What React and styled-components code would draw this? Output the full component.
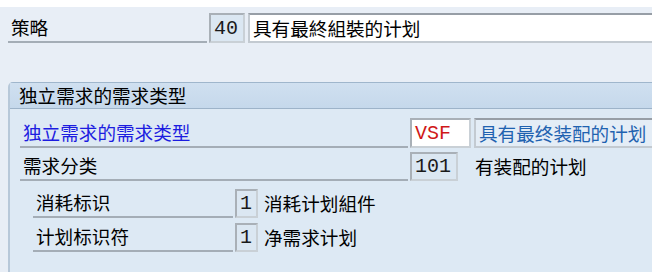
import React from "react";
import styled, { createGlobalStyle } from "styled-components";

const Global = createGlobalStyle`
  html, body { margin: 0; padding: 0; background: #ffffff; }
  body { font-family: "Noto Sans CJK SC", "Liberation Sans", sans-serif; }
`;

const Screen = styled.div`
  margin-top: 7px;
  width: 652px;
  height: 265px;
  box-sizing: border-box;
  background: #e8eef6;
  padding: 6px 0 0 8px;
  display: flex;
  flex-direction: column;
`;

const Row = styled.div`
  display: flex;
  align-items: stretch;
  height: ${(p) => p.$h || 29}px;
  margin-top: ${(p) => p.$mt || 0}px;
  padding-left: ${(p) => p.$indent || 0}px;
`;

const Label = styled.div`
  width: ${(p) => p.$w}px;
  box-sizing: border-box;
  padding-left: 3px;
  border-bottom: 2px solid #a4adb6;
  display: flex;
  align-items: center;
  font-size: 18.6px;
  line-height: 1;
  color: ${(p) => (p.$blue ? "#1c1ce0" : "#000")};
`;

const Key = styled.div`
  width: ${(p) => p.$w}px;
  margin-left: 2px;
  box-sizing: border-box;
  border: 2px solid #a9b0b7;
  border-right-color: #c9d0d6;
  border-bottom-color: #c9d0d6;
  background: ${(p) => (p.$white ? "#ffffff" : "#dbe7f2")};
  display: flex;
  align-items: center;
  padding-left: ${(p) => p.$pl ?? 3}px;
  font-family: "Liberation Mono", "DejaVu Sans Mono", monospace;
  font-size: 20px;
  color: ${(p) => (p.$red ? "#d01818" : "#1a1a1a")};
`;

const Desc = styled.div`
  flex: ${(p) => (p.$box ? 1 : "none")};
  margin-left: ${(p) => p.$ml ?? 3}px;
  box-sizing: border-box;
  display: flex;
  align-items: center;
  padding-left: ${(p) => p.$pl ?? 3}px;
  font-size: 18.6px;
  line-height: 1;
  color: ${(p) => (p.$blue ? "#1f62b0" : "#000")};
  background: ${(p) => (p.$white ? "#ffffff" : p.$box ? "#e4edf6" : "transparent")};
  border-top: ${(p) => (p.$box ? "2px solid #979ea6" : "none")};
  border-left: ${(p) => (p.$box ? "2px solid #c3cad1" : "none")};
  border-bottom: ${(p) => (p.$box ? "2px solid #c3cad1" : "none")};
`;

const Group = styled.div`
  margin-top: 39px;
  flex: 1;
  display: flex;
  flex-direction: column;
  background: #dde9f4;
  border-left: 2px solid #b7c8d9;
  border-top: 1px solid #9fb6cc;
  border-top-left-radius: 5px;
`;

const GroupHeader = styled.div`
  height: 25px;
  background: linear-gradient(#d0e0f0, #c5d8eb);
  border-bottom: 1px solid #9db3c9;
  display: flex;
  align-items: center;
  padding-left: 9px;
  font-size: 18.6px;
  line-height: 1;
  color: #000;
`;

const GroupBody = styled.div`
  display: flex;
  flex-direction: column;
  padding: 9px 0 0 10px;
`;

export default function App() {
  return (
    <>
      <Global />
      <Screen>
        <Row $h={30}>
          <Label $w={199}>策略</Label>
          <Key $w={36} $pl={3}>40</Key>
          <Desc $box $white>具有最終組裝的计划</Desc>
        </Row>
        <Group>
          <GroupHeader>独立需求的需求类型</GroupHeader>
          <GroupBody>
            <Row $h={30}>
              <Label $w={388} $blue>独立需求的需求类型</Label>
              <Key $w={61} $white $red $pl={3}>VSF</Key>
              <Desc $box $blue>具有最终装配的计划</Desc>
            </Row>
            <Row $h={29} $mt={4}>
              <Label $w={388}>需求分类</Label>
              <Key $w={48} $pl={3}>101</Key>
              <Desc $ml={0} $pl={17}>有装配的计划</Desc>
            </Row>
            <Row $h={29} $mt={8} $indent={13}>
              <Label $w={200}>消耗标识</Label>
              <Key $w={23} $pl={3}>1</Key>
              <Desc $ml={0} $pl={6}>消耗计划組件</Desc>
            </Row>
            <Row $h={29} $mt={5} $indent={13}>
              <Label $w={200}>计划标识符</Label>
              <Key $w={23} $pl={3}>1</Key>
              <Desc $ml={0} $pl={6}>净需求计划</Desc>
            </Row>
          </GroupBody>
        </Group>
      </Screen>
    </>
  );
}
